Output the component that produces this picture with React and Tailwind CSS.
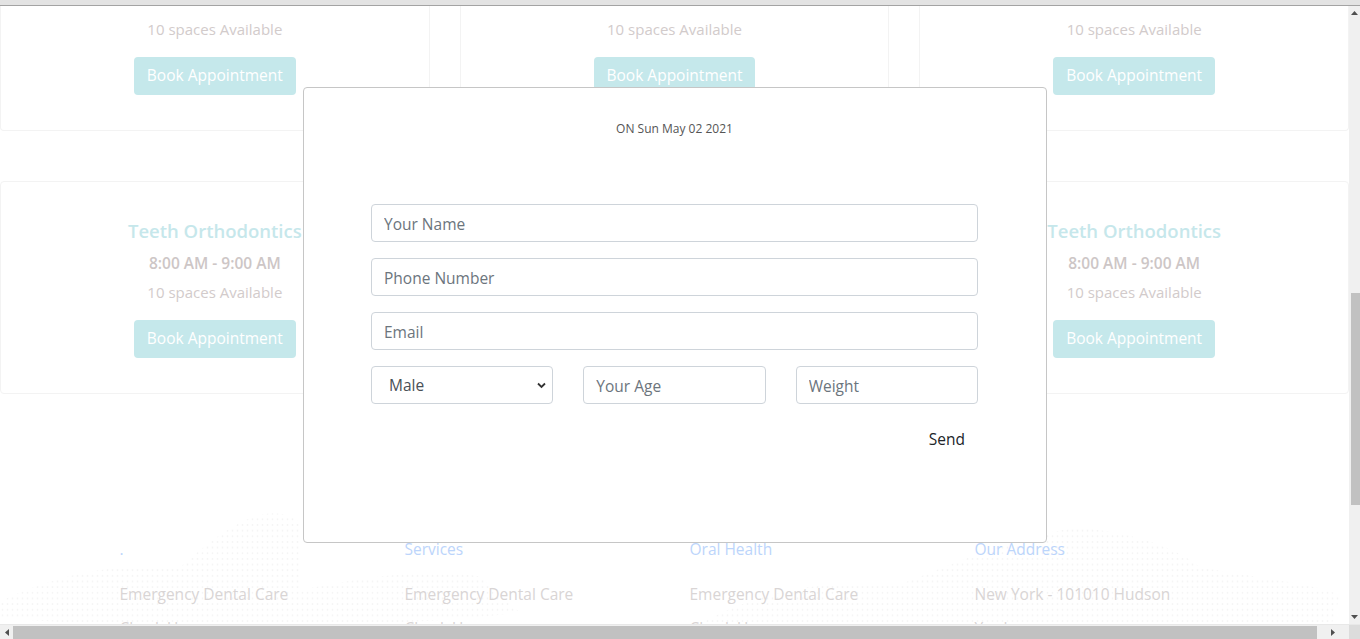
import React from "react";

function Card() {
  return (
    <div className="border border-[#f3f3f3] rounded-[4px] bg-white flex flex-col items-center pt-[35px] h-[213px]">
      <div className="text-[18.5px] leading-[27px] font-semibold text-[#c6e7eb]">Teeth Orthodontics</div>
      <div className="mt-[8px] text-[15.5px] leading-[22px] font-semibold text-[#cdc6c6]">8:00 AM - 9:00 AM</div>
      <div className="mt-[7px] text-[15px] leading-[22px] text-[#d2cbcb]">10 spaces Available</div>
      <div className="mt-[17px] h-[38px] px-[13px] rounded-[4px] bg-[#c5e8eb] text-white text-[15.5px] flex items-center">Book Appointment</div>
    </div>
  );
}

function TopCard() {
  return (
    <div className="border border-t-0 border-[#f3f3f3] rounded-b-[4px] bg-white flex flex-col items-center pt-[12px] pb-[35px]">
      <div className="text-[15px] leading-[22px] text-[#d2cbcb]">10 spaces Available</div>
      <div className="mt-[17px] h-[38px] px-[13px] rounded-[4px] bg-[#c5e8eb] text-white text-[15.5px] flex items-center">Book Appointment</div>
    </div>
  );
}

function Field({ placeholder }) {
  return (
    <input
      placeholder={placeholder}
      className="w-full h-[38px] rounded-[4px] border border-[#ced4da] px-[12px] pt-[1px] text-[15.5px] text-[#495057] placeholder:text-[#6c757d] outline-none"
    />
  );
}

function Dots() {
  return (
    <svg className="absolute left-0 top-0 w-full h-full" viewBox="0 0 1349 230" preserveAspectRatio="none">
      <defs>
        <pattern id="dp" width="5" height="5" patternUnits="userSpaceOnUse">
          <circle cx="2.5" cy="2.5" r="0.9" fill="#f4f4f4" />
        </pattern>
      </defs>
      <path d="M0 140 C60 115 120 105 180 110 C230 70 270 50 300 70 L300 160 C200 170 100 160 0 155 Z" fill="url(#dp)" />
      <path d="M300 130 C360 120 420 110 480 118 L520 150 C430 160 360 160 300 160 Z" fill="url(#dp)" />
      <path d="M700 160 C760 130 830 120 900 125 C960 105 1020 80 1080 75 C1140 80 1180 95 1200 110 C1260 120 1320 125 1340 135 L1330 165 C1100 175 900 175 700 170 Z" fill="url(#dp)" />
    </svg>
  );
}

export default function App() {
  const font = "font-['Open_Sans','Noto_Sans',sans-serif]";
  const cols = [
    { h: ".", items: ["Emergency Dental Care", "Check Up"] },
    { h: "Services", items: ["Emergency Dental Care", "Check Up"] },
    { h: "Oral Health", items: ["Emergency Dental Care", "Check Up"] },
    { h: "Our Address", items: ["New York - 101010 Hudson", "Yards"] },
  ];
  return (
    <div className={`w-[1360px] h-[639px] overflow-hidden flex flex-col bg-white ${font}`}>
      <div className="h-[6px] shrink-0 bg-[#e3e3e3] border-b border-[#a3a3a3]" />
      <div className="flex flex-1 min-h-0">
        <div className="relative flex-1 min-w-0 overflow-hidden">
          <div className="flex flex-col">
            <div className="grid grid-cols-3 gap-x-[30px] gap-y-[50px]">
              <TopCard />
              <TopCard />
              <TopCard />
              <Card />
              <Card />
              <Card />
            </div>
            <div className="relative mt-[49px] h-[260px]">
              <Dots />
              <div className="relative w-[1140px] mx-auto grid grid-cols-4 pt-[94px]">
                {cols.map((c, i) => (
                  <div key={i} className="px-[15px]">
                    <div className="text-[15.5px] leading-[24px] font-medium text-[#bcd5fb]">{c.h}</div>
                    <div className="mt-[21px] flex flex-col gap-[10px]">
                      {c.items.map((t, j) => (
                        <div key={j} className="text-[15.5px] leading-[24px] text-[#d9d5d5]">{t}</div>
                      ))}
                    </div>
                  </div>
                ))}
              </div>
            </div>
          </div>

          {/* Modal */}
          <div className="absolute left-[303px] top-[81px] w-[744px] h-[456px] bg-white border border-[#c6c6c6] rounded-[4px] pl-[67px] pr-[68px] flex flex-col">
            <div className="mt-[33px] text-center text-[12px] leading-[16px] text-[#555]">ON Sun May 02 2021</div>
            <div className="mt-[67px] flex flex-col gap-[16px]">
              <Field placeholder="Your Name" />
              <Field placeholder="Phone Number" />
              <Field placeholder="Email" />
              <div className="grid grid-cols-3 gap-[30px]">
                <div className="relative">
                  <select className="appearance-none w-full h-[38px] rounded-[4px] border border-[#ced4da] pl-[17px] pt-[2px] text-[15.5px] text-[#495057] bg-white outline-none">
                    <option>Male</option>
                    <option>Female</option>
                  </select>
                  <svg className="absolute right-[7px] top-[16px] w-[9px] h-[7px] pointer-events-none" viewBox="0 0 9 7">
                    <path d="M1 1.5 L4.5 5 L8 1.5" fill="none" stroke="#333" strokeWidth="1.8" />
                  </svg>
                </div>
                <Field placeholder="Your Age" />
                <Field placeholder="Weight" />
              </div>
            </div>
            <div className="mt-[16px] flex justify-end">
              <div className="h-[38px] px-[13px] pt-[1px] flex items-center text-[15.5px] text-[#212529]">Send</div>
            </div>
          </div>
        </div>

        {/* vertical scrollbar */}
        <div className="w-[11px] shrink-0 bg-[#f0f0f0] flex flex-col items-end">
          <div className="h-[14px] w-full flex items-center justify-center">
            <svg width="7" height="4" viewBox="0 0 7 4"><path d="M0 4 L3.5 0 L7 4 Z" fill="#505050" /></svg>
          </div>
          <div className="h-[273px]" />
          <div className="w-[9px] h-[212px] bg-[#c1c1c1]" />
          <div className="flex-1" />
          <div className="h-[14px] w-full flex items-center justify-center">
            <svg width="7" height="4" viewBox="0 0 7 4"><path d="M0 0 L3.5 4 L7 0 Z" fill="#505050" /></svg>
          </div>
        </div>
      </div>

      {/* horizontal scrollbar */}
      <div className="h-[15px] shrink-0 flex bg-[#f0f0f0] border-t border-[#e8e8e8]">
        <div className="w-[13px] flex items-center justify-center">
          <svg width="4" height="7" viewBox="0 0 4 7"><path d="M4 0 L0 3.5 L4 7 Z" fill="#505050" /></svg>
        </div>
        <div className="w-[1304px] mt-[1px] bg-[#c1c1c1]" />
        <div className="flex-1 flex items-center justify-center">
          <svg width="4" height="7" viewBox="0 0 4 7"><path d="M0 0 L4 3.5 L0 7 Z" fill="#505050" /></svg>
        </div>
        <div className="w-[11px] bg-[#dcdcdc]" />
      </div>
    </div>
  );
}
